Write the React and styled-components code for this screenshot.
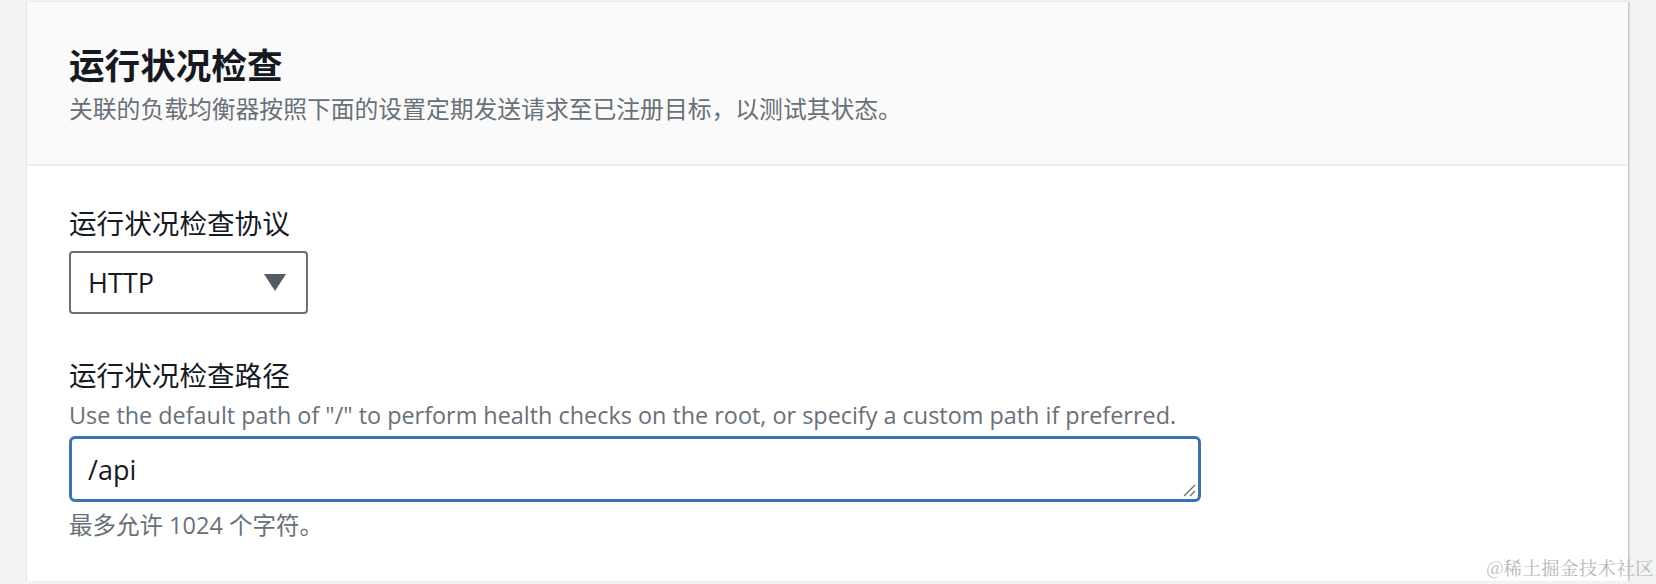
import React from 'react'
import styled, { createGlobalStyle } from 'styled-components'

const GlobalStyle = createGlobalStyle`
  html, body {
    margin: 0;
    padding: 0;
    background: #f2f3f3;
  }
  body {
    font-family: "Open Sans", "Noto Sans CJK SC", sans-serif;
    color: #16191f;
  }
`

const Page = styled.div`
  position: relative;
  width: 1656px;
  height: 584px;
  padding: 2px 0 0 27px;
  box-sizing: border-box;
  overflow: hidden;
`

const Panel = styled.section`
  width: 1601px;
  height: 579px;
  background: #ffffff;
  box-shadow: -1px 0 0 #e3e5e5, 1px 0 0 #c9cccc, 2px 0 1px #dcdede, 0 -1px 0 #ebeded;
  display: flex;
  flex-direction: column;
`

const Header = styled.header`
  height: 164px;
  box-sizing: border-box;
  background: #fafafa;
  border-bottom: 2px solid #eaeded;
  padding: 39px 42px 0;
`

const Title = styled.h2`
  margin: 0;
  font-family: "Noto Sans CJK SC", sans-serif;
  font-size: 35.6px;
  line-height: 46px;
  font-weight: 700;
  color: #16191f;
`

const Subtitle = styled.p`
  margin: 5px 0 0;
  font-family: "Noto Sans CJK SC", sans-serif;
  font-size: 23.8px;
  line-height: 32px;
  color: #687078;
`

const Body = styled.div`
  padding: 37px 42px 0;
  display: flex;
  flex-direction: column;
  gap: 41px;
`

const Field = styled.div`
  display: flex;
  flex-direction: column;
`

const Label = styled.label`
  font-family: "Noto Sans CJK SC", sans-serif;
  font-size: 27.6px;
  line-height: 38px;
  color: #16191f;
`

const Description = styled.div`
  margin-top: 6px;
  font-family: "Open Sans", "Noto Sans CJK SC", sans-serif;
  font-size: 23.4px;
  line-height: 32px;
  color: #687078;
`

const Hint = styled.div`
  margin-top: 7px;
  font-family: "Open Sans", "Noto Sans CJK SC", sans-serif;
  font-size: 23.5px;
  line-height: 32px;
  color: #687078;
`

const Select = styled.div`
  margin-top: 10px;
  width: 239px;
  height: 63px;
  box-sizing: border-box;
  border: 2px solid #687078;
  border-radius: 4px;
  background: #ffffff;
  display: flex;
  align-items: center;
  justify-content: space-between;
  padding: 0 20px 0 17px;
  font-size: 27px;
  color: #16191f;
`

const Caret = styled.svg`
  width: 22px;
  height: 17px;
  fill: #545b64;
`

const InputBox = styled.div`
  position: relative;
  margin-top: 5px;
  width: 1132px;
  height: 66px;
  box-sizing: border-box;
  border: 3px solid #3a72b3;
  border-radius: 6px;
  background: #ffffff;
  display: flex;
  align-items: center;
  padding: 0 16px;
  font-size: 27px;
  color: #16191f;
`

const Grip = styled.svg`
  position: absolute;
  right: 2px;
  bottom: 2px;
  width: 14px;
  height: 14px;
  stroke: #6b6b6b;
  stroke-width: 1.3;
`

const Watermark = styled.div`
  position: absolute;
  right: 2px;
  bottom: 6px;
  font-family: "Noto Serif CJK SC", "Noto Sans CJK SC", serif;
  font-size: 18.5px;
  line-height: 22px;
  color: #b7b7b7;
  letter-spacing: 0.3px;
`

export default function App() {
  return (
    <>
      <GlobalStyle />
      <Page>
        <Panel>
          <Header>
            <Title>运行状况检查</Title>
            <Subtitle>关联的负载均衡器按照下面的设置定期发送请求至已注册目标，以测试其状态。</Subtitle>
          </Header>
          <Body>
            <Field>
              <Label>运行状况检查协议</Label>
              <Select>
                <span>HTTP</span>
                <Caret viewBox="0 0 22 17">
                  <polygon points="0,0 22,0 11,17" />
                </Caret>
              </Select>
            </Field>
            <Field>
              <Label>运行状况检查路径</Label>
              <Description>
                Use the default path of "/" to perform health checks on the root, or specify a custom path if preferred.
              </Description>
              <InputBox>
                <span>/api</span>
                <Grip viewBox="0 0 14 14">
                  <line x1="13" y1="2" x2="2" y2="13" />
                  <line x1="13" y1="8" x2="8" y2="13" />
                </Grip>
              </InputBox>
              <Hint>最多允许 1024 个字符。</Hint>
            </Field>
          </Body>
        </Panel>
        <Watermark>@稀土掘金技术社区</Watermark>
      </Page>
    </>
  )
}
